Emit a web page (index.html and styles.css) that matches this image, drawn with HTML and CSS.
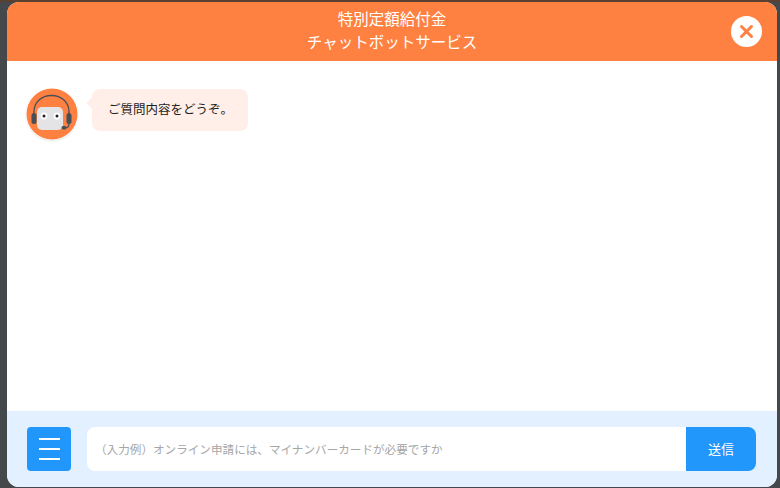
FILE: index.html
```html
<!DOCTYPE html>
<html lang="ja">
<head>
<meta charset="utf-8">
<title>チャットボットサービス</title>
<link rel="stylesheet" href="styles.css">
</head>
<body>
<div class="backdrop">
  <main class="modal">
    <header class="head">
      <h1 class="title">特別定額給付金<br>チャットボットサービス</h1>
      <button class="close" aria-label="閉じる">
        <svg width="17" height="17" viewBox="0 0 17 17"><path d="M3.5 3.5 13.5 13.5M13.5 3.5 3.5 13.5" stroke="#ff8142" stroke-width="3" stroke-linecap="round" fill="none"/></svg>
      </button>
    </header>
    <section class="log">
      <div class="msg">
        <div class="avatar">
          <svg width="52" height="52" viewBox="0 0 52 52">
            <circle cx="26" cy="26" r="25.5" fill="#ff8142"/>
            <path d="M8 26V24C8 14 15.5 7.5 25.5 7.5S43 14 43 24V26" fill="none" stroke="#4a4f55" stroke-width="1.3"/>
            <rect x="11" y="19" width="26" height="23" rx="5" fill="#e4e4e6"/>
            <rect x="5.5" y="25" width="5" height="11" rx="2.5" fill="#46505a"/>
            <rect x="40.5" y="25" width="5" height="11" rx="2.5" fill="#46505a"/>
            <circle cx="18" cy="28" r="3.4" fill="#fff"/>
            <circle cx="31" cy="28" r="3.4" fill="#fff"/>
            <circle cx="18" cy="28" r="1.5" fill="#222"/>
            <circle cx="31" cy="28" r="1.5" fill="#222"/>
            <path d="M43 36C43 38.500 41.500 40 38.500 40" fill="none" stroke="#46505a" stroke-width="1.2"/>
            <rect x="35.500" y="38" width="5" height="3.400" rx="1.700" fill="#46505a"/>
          </svg>
        </div>
        <p class="bubble">ご質問内容をどうぞ。</p>
      </div>
    </section>
    <footer class="foot">
      <button class="menu" aria-label="メニュー"><span></span><span></span><span></span></button>
      <form class="form">
        <input class="field" type="text" placeholder="（入力例）オンライン申請には、マイナンバーカードが必要ですか">
        <button class="send" type="button">送信</button>
      </form>
    </footer>
  </main>
</div>
</body>
</html>
```
FILE: styles.css
```css
* { box-sizing: border-box; }
html, body { margin: 0; height: 100%; }
body {
  font-family: "Noto Sans CJK JP", "Liberation Sans", sans-serif;
  background: #45484b;
  overflow: hidden;
}
.backdrop {
  width: 780px;
  height: 488px;
  padding: 0 3px 1px 7px;
  border-top: 2px solid #5a4030;
  display: flex;
}
.modal {
  flex: 1;
  display: flex;
  flex-direction: column;
  background: #fff;
  border-radius: 12px;
  overflow: hidden;
}
.head {
  height: 59px;
  flex: none;
  padding-bottom: 4px;
  background: #ff8142;
  position: relative;
  display: flex;
  align-items: center;
  justify-content: center;
}
.title {
  margin: 0;
  color: #fff;
  font-size: 15.5px;
  font-weight: 400;
  line-height: 23px;
  text-align: center;
}
.close {
  position: absolute;
  right: 15px;
  top: 14px;
  width: 31px;
  height: 31px;
  border: 0;
  padding: 0;
  border-radius: 50%;
  background: #fff;
  display: flex;
  align-items: center;
  justify-content: center;
}
.log {
  flex: 1;
  padding: 27px 19px;
}
.msg {
  display: flex;
  align-items: flex-start;
  gap: 14px;
}
.avatar {
  width: 52px;
  height: 52px;
  flex: none;
  border-radius: 50%;
  box-shadow: 0 1px 2px rgba(0, 0, 0, .1);
}
.avatar svg { display: block; }
.bubble {
  position: relative;
  margin: 1px 0 0;
  width: 156px;
  height: 42px;
  padding: 0 16px;
  background: #ffefe8;
  border-radius: 8px;
  color: #222;
  font-size: 12.5px;
  line-height: 40px;
  white-space: nowrap;
}
.bubble::before {
  content: "";
  position: absolute;
  left: -4px;
  top: 10px;
  width: 8px;
  height: 8px;
  background: #ffefe8;
  transform: rotate(45deg);
}
.foot {
  height: 76px;
  flex: none;
  background: #e2f0ff;
  padding: 16px 20px;
  display: flex;
  gap: 16px;
}
.menu {
  width: 44px;
  height: 44px;
  flex: none;
  border: 0;
  padding: 0;
  background: #2196fb;
  border-radius: 4px;
  display: flex;
  flex-direction: column;
  align-items: center;
  justify-content: center;
  gap: 8px;
}
.menu span {
  display: block;
  width: 21px;
  height: 2px;
  background: #fff;
}
.form {
  width: 669px;
  display: flex;
}
.field {
  flex: 1;
  min-width: 0;
  height: 44px;
  border: 0;
  outline: 0;
  padding: 0 8px;
  background: #fff;
  border-radius: 8px 0 0 8px;
  font-family: inherit;
  font-size: 11.6px;
}
.field::placeholder { color: #a6a6a6; opacity: 1; }
.send {
  width: 70px;
  height: 44px;
  flex: none;
  border: 0;
  padding: 0 0 2px;
  background: #2196fb;
  border-radius: 0 8px 8px 0;
  color: #fff;
  font-family: inherit;
  font-size: 13px;
}
```
